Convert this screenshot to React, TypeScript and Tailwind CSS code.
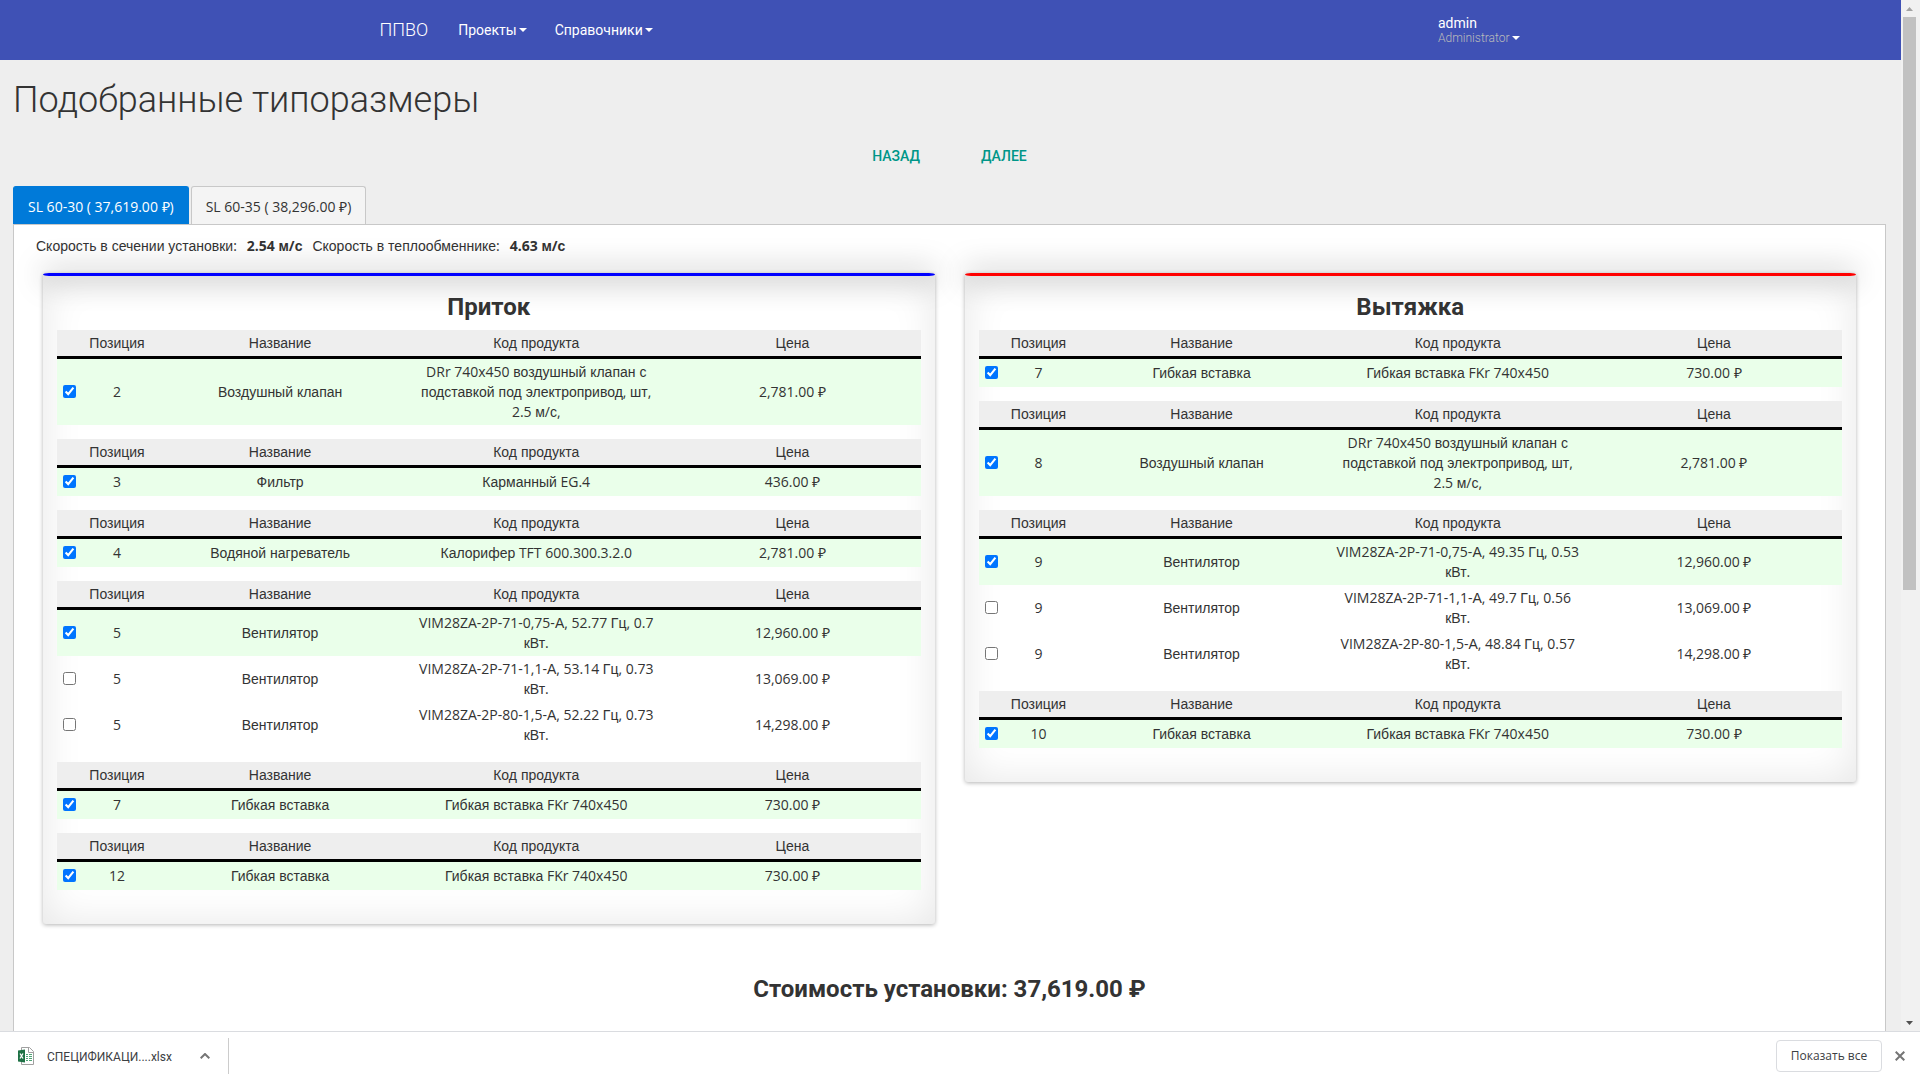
import React, { useState } from "react";

type Item = {
  position: number;
  name: string;
  code: string;
  price: string;
  checked?: boolean;
};

const supplyGroups: Item[][] = [
  [
    {
      position: 2,
      name: "Воздушный клапан",
      code: "DRr 740x450 воздушный клапан с подставкой под электропривод, шт, 2.5 м/с,",
      price: "2,781.00 ₽",
      checked: true,
    },
  ],
  [{ position: 3, name: "Фильтр", code: "Карманный EG.4", price: "436.00 ₽", checked: true }],
  [
    {
      position: 4,
      name: "Водяной нагреватель",
      code: "Калорифер TFT 600.300.3.2.0",
      price: "2,781.00 ₽",
      checked: true,
    },
  ],
  [
    {
      position: 5,
      name: "Вентилятор",
      code: "VIM28ZA-2P-71-0,75-А, 52.77 Гц, 0.7 кВт.",
      price: "12,960.00 ₽",
      checked: true,
    },
    {
      position: 5,
      name: "Вентилятор",
      code: "VIM28ZA-2P-71-1,1-А, 53.14 Гц, 0.73 кВт.",
      price: "13,069.00 ₽",
    },
    {
      position: 5,
      name: "Вентилятор",
      code: "VIM28ZA-2P-80-1,5-А, 52.22 Гц, 0.73 кВт.",
      price: "14,298.00 ₽",
    },
  ],
  [
    {
      position: 7,
      name: "Гибкая вставка",
      code: "Гибкая вставка FKr 740x450",
      price: "730.00 ₽",
      checked: true,
    },
  ],
  [
    {
      position: 12,
      name: "Гибкая вставка",
      code: "Гибкая вставка FKr 740x450",
      price: "730.00 ₽",
      checked: true,
    },
  ],
];

const exhaustGroups: Item[][] = [
  [
    {
      position: 7,
      name: "Гибкая вставка",
      code: "Гибкая вставка FKr 740x450",
      price: "730.00 ₽",
      checked: true,
    },
  ],
  [
    {
      position: 8,
      name: "Воздушный клапан",
      code: "DRr 740x450 воздушный клапан с подставкой под электропривод, шт, 2.5 м/с,",
      price: "2,781.00 ₽",
      checked: true,
    },
  ],
  [
    {
      position: 9,
      name: "Вентилятор",
      code: "VIM28ZA-2P-71-0,75-А, 49.35 Гц, 0.53 кВт.",
      price: "12,960.00 ₽",
      checked: true,
    },
    {
      position: 9,
      name: "Вентилятор",
      code: "VIM28ZA-2P-71-1,1-А, 49.7 Гц, 0.56 кВт.",
      price: "13,069.00 ₽",
    },
    {
      position: 9,
      name: "Вентилятор",
      code: "VIM28ZA-2P-80-1,5-А, 48.84 Гц, 0.57 кВт.",
      price: "14,298.00 ₽",
    },
  ],
  [
    {
      position: 10,
      name: "Гибкая вставка",
      code: "Гибкая вставка FKr 740x450",
      price: "730.00 ₽",
      checked: true,
    },
  ],
];

// Latin and digits are set in Open Sans, Cyrillic runs in Arial metrics
const Mixed: React.FC<{ children: string }> = ({ children }) => (
  <span>
    {children.split(/([а-яё₽]+(?: [а-яё₽]+)*)/i).map((part, index) =>
      index % 2 === 1 ? (
        <span key={index} className="font-['Liberation_Sans',Arial,sans-serif]">
          {part}
        </span>
      ) : (
        part
      ),
    )}
  </span>
);

const Caret: React.FC = () => (
  <svg className="w-2 h-1 fill-current shrink-0" viewBox="0 0 8 4">
    <path d="M0 0h8L4 4z" />
  </svg>
);

const Navbar: React.FC = () => (
  <nav className="h-[60px] bg-[#3f51b5] text-white font-['Roboto',sans-serif] text-sm shrink-0">
    <div className="max-w-[1170px] h-full mx-auto px-3.5 flex items-center">
      <a href="#" className="text-lg font-light">
        ППВО
      </a>
      <button className="ml-[30px] flex items-center gap-0.5">
        Проекты
        <Caret />
      </button>
      <button className="ml-7 flex items-center gap-0.5">
        Справочники
        <Caret />
      </button>
      <button className="ml-auto mr-0.5 text-left leading-4">
        <span className="block">admin</span>
        <span className="flex items-center gap-0.5 text-xs leading-[14px]">
          <span className="text-[#bbb] font-light">Administrator</span>
          <Caret />
        </span>
      </button>
    </div>
  </nav>
);

const ItemTable: React.FC<{ items: Item[] }> = ({ items }) => {
  const [checked, setChecked] = useState(items.map((item) => !!item.checked));

  const toggle = (index: number) =>
    setChecked((prev) => prev.map((value, i) => (i === index ? !value : value)));

  return (
    <table className="w-full table-fixed border-collapse text-center mb-3.5">
      <colgroup>
        <col className="w-[25px]" />
        <col className="w-[70px]" />
        <col />
        <col />
        <col />
      </colgroup>
      <thead>
        <tr className="bg-[#eee] font-['Liberation_Sans',Arial,sans-serif]">
          <th className="p-0" />
          <th className="font-normal py-[3px] px-0">Позиция</th>
          <th className="font-normal py-[3px]">Название</th>
          <th className="font-normal py-[3px]">Код продукта</th>
          <th className="font-normal py-[3px]">Цена</th>
        </tr>
        <tr>
          <td colSpan={5} className="h-[3px] p-0 bg-black" />
        </tr>
      </thead>
      <tbody>
        {items.map((item, index) => (
          <tr key={index} className={checked[index] ? "bg-[#eaffea]" : ""}>
            <td className="h-7 p-0 pb-px">
              <input
                type="checkbox"
                aria-label={`${item.position} ${item.name}`}
                checked={checked[index]}
                onChange={() => toggle(index)}
                className="block mx-auto w-[13px] h-[13px] accent-[#0075ff]"
              />
            </td>
            <td className="py-[3px]">{item.position}</td>
            <td className="py-[3px]">
              <Mixed>{item.name}</Mixed>
            </td>
            <td className="p-[3px]">
              <Mixed>{item.code}</Mixed>
            </td>
            <td className="py-[3px]">
              <Mixed>{item.price}</Mixed>
            </td>
          </tr>
        ))}
      </tbody>
    </table>
  );
};

const FlowCard: React.FC<{ title: string; lineClass: string; groups: Item[][] }> = ({
  title,
  lineClass,
  groups,
}) => (
  <section className="flex-1 min-w-0 rounded-[3px] shadow-[0_1px_4px_rgba(0,0,0,0.3),inset_0_0_40px_rgba(0,0,0,0.1)]">
    <div
      className={`h-[3px] rounded-[8px/2px] shadow-[0_0_30px_2px_rgba(0,0,0,0.4)] ${lineClass}`}
    />
    <div className="px-3.5 pt-4 pb-5">
      <h3 className="font-['Roboto',sans-serif] text-2xl leading-[30px] font-bold text-center mb-2">
        {title}
      </h3>
      {groups.map((items, index) => (
        <ItemTable key={index} items={items} />
      ))}
    </div>
  </section>
);

const Scrollbar: React.FC = () => (
  <div className="w-[19px] pr-0.5 shrink-0 bg-[#f1f1f1] flex flex-col items-center">
    <div className="h-[17px] flex items-center">
      <svg className="w-[7px] h-1 fill-[#a3a3a3]" viewBox="0 0 7 4">
        <path d="M0 4h7L3.5 0z" />
      </svg>
    </div>
    <div className="flex-1 w-[13px]">
      <div className="h-[573px] bg-[#c1c1c1]" />
    </div>
    <div className="h-[17px] flex items-center">
      <svg className="w-[7px] h-1 fill-[#505050]" viewBox="0 0 7 4">
        <path d="M0 0h7L3.5 4z" />
      </svg>
    </div>
  </div>
);

const ExcelIcon: React.FC = () => (
  <svg className="w-4 h-[18px] shrink-0" viewBox="0 0 16 18">
    <path d="M3.5 .5h8l4 4v13h-12z" fill="#fff" stroke="#a0a0a0" />
    <path d="M10.5 .5v5h5" fill="none" stroke="#a0a0a0" />
    <path
      d="M8 7h2v1H8zM11 7h3v1h-3zM8 9h2v1H8zM11 9h3v1h-3zM8 11h2v1H8zM11 11h3v1h-3zM8 13h2v1H8zM11 13h3v1h-3z"
      fill="#4fa576"
    />
    <path d="M0 3.5l7-1v13l-7-1z" fill="#1e7145" />
    <path d="M2 6.5l3 5M5 6.5l-3 5" stroke="#fff" strokeWidth="1.3" />
  </svg>
);

const DownloadBar: React.FC = () => (
  <footer className="h-[49px] shrink-0 bg-white border-t border-[#dadce0] flex items-center font-['Open_Sans',sans-serif] text-xs text-[#3c4043]">
    <button className="h-9 w-[229px] pl-[18px] pr-[18px] flex items-center border-r border-[#ccc]">
      <ExcelIcon />
      <span className="ml-[13px] pt-0.5 font-['Roboto',sans-serif] font-normal">
        СПЕЦИФИКАЦИ....xlsx
      </span>
      <svg
        className="ml-auto w-2.5 h-1.5"
        viewBox="0 0 10 6"
        fill="none"
        stroke="#757575"
        strokeWidth="2"
      >
        <path d="M.7 5.3L5 1l4.3 4.3" />
      </svg>
    </button>
    <button className="ml-auto h-8 w-[106px] border border-[#dadce0] rounded font-medium">
      Показать все
    </button>
    <button aria-label="Закрыть" className="ml-[13px] mr-[15px]">
      <svg className="w-2.5 h-2.5" viewBox="0 0 10 10" stroke="#757575" strokeWidth="2">
        <path d="M.7.7l8.6 8.6M9.3.7L.7 9.3" />
      </svg>
    </button>
  </footer>
);

const App: React.FC = () => {
  return (
    <div className="h-screen flex flex-col bg-[#eee] text-[#333] font-['Open_Sans',sans-serif] text-sm leading-5">
      <div className="flex-1 min-h-0 flex">
        <div className="flex-1 min-w-0 flex flex-col overflow-hidden">
          <Navbar />
          <main className="flex-1 pl-[13px] pr-[15px] flex flex-col">
            <h1 className="mt-5 font-['Roboto',sans-serif] text-4xl font-light">
              Подобранные типоразмеры
            </h1>
            <div className="mt-[26px] flex justify-center gap-[61px] font-['Roboto',sans-serif] font-medium text-[#009688]">
              <button>НАЗАД</button>
              <button>ДАЛЕЕ</button>
            </div>
            <div role="tablist" className="mt-5 flex gap-0.5">
              <button
                role="tab"
                aria-selected="true"
                className="h-[39px] px-3.5 pt-0.5 border border-b-0 border-[#007ad9] rounded-t-[3px] bg-[#007ad9] text-white"
              >
                <Mixed>SL 60-30 ( 37,619.00 ₽)</Mixed>
              </button>
              <button
                role="tab"
                aria-selected="false"
                className="h-[38px] px-3.5 pt-0.5 border border-b-0 border-[#c8c8c8] rounded-t-[3px] bg-[#f4f4f4]"
              >
                <Mixed>SL 60-35 ( 38,296.00 ₽)</Mixed>
              </button>
            </div>
            <div className="-mt-px flex-1 bg-white border border-[#c8c8c8] border-b-0">
              <p className="pt-[11px] pl-[22px] flex">
                <Mixed>Скорость в сечении установки:</Mixed>
                <b className="mx-2.5 font-bold">
                  <Mixed>2.54 м/с</Mixed>
                </b>
                <Mixed>Скорость в теплообменнике:</Mixed>
                <b className="mx-2.5 font-bold">
                  <Mixed>4.63 м/с</Mixed>
                </b>
              </p>
              <div className="mt-[17px] px-[29px] flex items-start gap-[30px]">
                <FlowCard title="Приток" lineClass="bg-[#0000ff]" groups={supplyGroups} />
                <FlowCard title="Вытяжка" lineClass="bg-[#ff0000]" groups={exhaustGroups} />
              </div>
              <h3 className="mt-[50px] pb-16 font-['Roboto',sans-serif] text-2xl leading-[30px] font-bold text-center">
                Стоимость установки: 37,619.00 ₽
              </h3>
            </div>
          </main>
        </div>
        <Scrollbar />
      </div>
      <DownloadBar />
    </div>
  );
};

export default App;
